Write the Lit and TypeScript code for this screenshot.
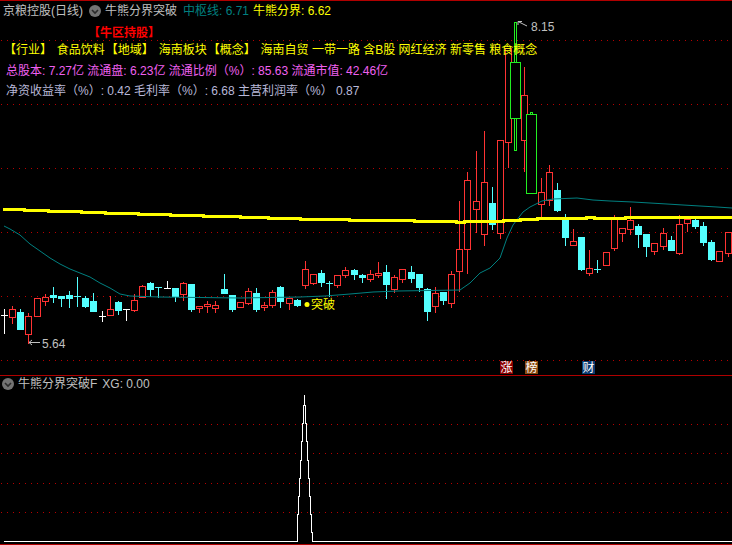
import { LitElement, html, css, svg } from "lit";
import { customElement } from "lit/decorators.js";

type C = [string, number, number, number, number];
// type, high, body top, body bottom, low  (index = position on the time axis)
const CANDLES: C[] = [
  ["w",309,315,315,333],["r",306,309,317,323],["c",309,312,329,329],["r",313,316,334,343],["r",298,298,316,316],
  ["r",294,297,301,305],["c",287,295,297,302],["c",296,296,298,306],["c",291,295,298,307],["c",277,296,296,306],
  ["c",296,298,306,307],["c",293,301,311,311],["w",311,316,316,321],["r",296,309,315,315],["c",301,302,310,314],
  ["w",309,309,309,320],["r",294,300,310,311],["r",285,286,297,297],["c",282,283,289,296],["c",287,287,287,297],
  ["w",281,288,288,288],["c",288,288,296,301],["r",282,283,294,300],["c",284,284,309,311],["r",306,306,308,312],
  ["r",301,304,306,312],["r",301,305,308,312],["c",274,289,293,293],["c",295,295,309,311],["r",302,302,307,307],
  ["r",288,291,303,304],["c",288,293,309,311],["r",302,305,307,310],["r",290,292,305,307],["c",286,287,301,307],
  ["r",298,298,303,309],["c",299,300,305,306],["r",261,269,285,288],["r",274,274,283,284],["c",270,273,282,286],
  ["c",281,283,283,296],["r",275,275,285,287],["r",267,270,275,277],["c",269,270,274,279],["c",274,275,277,282],
  ["r",270,274,279,281],["r",262,273,275,277],["c",265,272,284,298],["r",275,277,289,292],["r",269,269,279,282],
  ["c",266,272,278,282],["c",274,274,287,291],["c",288,289,311,320],["r",287,293,306,312],["c",292,292,300,304],
  ["r",271,274,303,307],["r",201,249,271,291],["r",172,180,249,273],["r",151,201,209,232],["r",131,182,234,245],
  ["c",187,203,224,229],["r",140,140,233,238],["r",48,48,142,167],["g",22,62,118,150],["r",67,95,140,171],
  ["g",112,114,193,193],["r",178,192,204,216],["r",165,172,200,205],["c",183,190,210,211],["c",214,220,237,245],
  ["r",229,241,245,245],["c",237,237,269,270],["r",250,268,273,275],["c",260,269,269,272],["r",252,252,265,265],
  ["r",215,219,248,250],["r",228,228,233,241],["r",207,220,229,234],["c",224,226,234,247],["c",234,234,246,256],
  ["r",243,243,251,254],["r",228,233,246,249],["c",236,240,250,250],["r",215,224,253,254],["r",219,219,223,231],
  ["c",219,220,226,228],["c",222,226,242,245],["c",240,242,259,260],["r",251,251,261,261],["r",232,232,253,256],
];

const COLORS: Record<string, string> = { r: "#ff3333", c: "#54ffff", w: "#ffffff", g: "#22ee22" };

const TEAL = "4,226 10,229 20,235 30,244 40,251 50,258 60,264 70,269 80,273 90,277 100,283 110,288 120,294 130,296 160,297 240,298 300,297 325,296 350,294 373,292 398,291 460,290 470,283 480,273 490,268 500,258 507,238 513,225 523,212 530,207 542,201 553,199 577,198 593,200 610,201 633,202 650,203 667,204 683,205 700,206 717,207 732,208";

const YELLOW: [number, number][] = [
  [3,209],[24,210],[48,211],[81,212],[105,213],[138,214],[170,215],[203,216],[240,217],[268,218],[300,219],
  [349,220],[414,221],[456,222],[464,221],[503,220],[520,219],[537,218],[586,217],[594,218],[625,217],[732,217],
];
const yellowPath = () => {
  let d = `M${YELLOW[0][0]} ${YELLOW[0][1]}.5`;
  for (let i = 1; i < YELLOW.length; i++) {
    d += `H${YELLOW[i][0]}`;
    if (i < YELLOW.length - 1) d += `V${YELLOW[i][1]}.5`;
  }
  return d;
};

const xOf = (i: number) => Math.round(4 + 8.13 * i);

const candle = (c: C, i: number) => {
  const [t, hi, top, bot, lo] = c;
  const cx = xOf(i);
  const col = COLORS[t];
  const mid = cx + 0.5;
  if (t === "g") {
    return svg`<rect class="hollow" x=${cx - 1.5} y=${hi + 0.5} width="2" height=${lo - hi} stroke=${col}></rect>
      <rect class="hollow" x=${cx - 5.5} y=${top + 0.5} width="10" height=${bot - top} stroke=${col}></rect>`;
  }
  const wicks = svg`<path d="M${mid} ${hi}V${top}M${mid} ${bot}V${lo + 1}" stroke=${col}></path>`;
  if (top === bot) {
    return svg`${wicks}<path d="M${cx - 3} ${top + 0.5}H${cx + 4}" stroke=${col}></path>`;
  }
  if (t === "c") {
    return svg`${wicks}<rect x=${cx - 3} y=${top} width="7" height=${bot - top + 1} fill=${col}></rect>`;
  }
  return svg`${wicks}<rect class="hollow" x=${cx - 2.5} y=${top + 0.5} width="6" height=${bot - top} stroke=${col}></rect>`;
};

const dotted = (y: number) => svg`<line class="dot" x1="1" x2="732" y1=${y + 0.5} y2=${y + 0.5}></line>`;

const peak = () => {
  const ys = [541.5, 532, 514, 496, 478, 460, 441, 423, 405, 395];
  const leftX = [0, 297.5, 297.5, 298.5, 299.5, 300.5, 301.5, 302.5, 303.5, 304.5];
  const rightX = [0, 312.5, 311.5, 310.5, 309.5, 308.5, 307.5, 306.5, 305.5, 304.5];
  const pts: string[] = ["4,541.5"];
  for (let k = 1; k < ys.length; k++) pts.push(`${leftX[k]},${ys[k - 1]}`, `${leftX[k]},${ys[k]}`);
  for (let k = ys.length - 1; k > 0; k--) pts.push(`${rightX[k]},${ys[k]}`, `${rightX[k]},${ys[k - 1]}`);
  pts.push("732,541.5");
  return pts.join(" ");
};

const chevron = html`<svg class="icon" width="12" height="12" viewBox="0 0 12 12">
  <circle cx="6" cy="6" r="6" fill="#737373"></circle>
  <path d="M3 5 L6 8 L9 5" fill="none" stroke="#2b2b2b" stroke-width="1.6"></path>
</svg>`;

@customElement("app-root")
export class AppRoot extends LitElement {
  static styles = css`
    :host {
      display: block;
      width: 732px;
      height: 545px;
      background: #000;
      overflow: hidden;
      font-family: "Liberation Sans", "Noto Sans CJK SC", sans-serif;
      font-size: 12px;
      line-height: 16px;
      white-space: nowrap;
    }
    .pane { position: relative; }
    .pane.main { height: 375px; }
    .pane.sub { height: 170px; }
    .chart { position: absolute; inset: 0; display: block; }
    .chart path, .chart line, .chart rect, .chart polyline { shape-rendering: crispEdges; }
    .chart path, .chart polyline { fill: none; }
    .chart .hollow { fill: #000; stroke-width: 1; }
    .chart .dot { stroke: #b80000; stroke-width: 1; stroke-dasharray: 1 5; }
    .chart .rule { stroke: #b00000; stroke-width: 1; }
    .chart .teal { stroke: #008080; stroke-width: 1; shape-rendering: auto; }
    .chart .yellow { stroke: #ffff00; stroke-width: 3; }
    .chart .mark { stroke: #c0c0c0; stroke-width: 1; shape-rendering: auto; }
    .chart .peak { stroke: #fff; stroke-width: 1; }
    .chart text { font-size: 12px; font-family: "Liberation Sans", "Noto Sans CJK SC", sans-serif; }
    .chart .price { fill: #c0c0c0; }
    .chart .sign { fill: #ffff00; }
    .chart .badge { fill: #fff; text-anchor: middle; }

    .head { position: relative; display: flex; flex-direction: column; align-items: flex-start; }
    .row { display: flex; align-items: center; height: 16px; }
    .line { display: block; height: 16px; }
    .title { margin-top: 3px; padding-left: 3px; }
    .name { color: #c0c0c0; width: 86px; }
    .icon { flex: none; margin-right: 4px; }
    .indicator { color: #c0c0c0; width: 78px; }
    .mid { color: #008080; width: 70px; }
    .bound { color: #ffff00; }
    .hold { margin-top: 6px; padding-left: 88px; color: #ff0000; font-weight: 700; }
    .info { margin-top: 1px; padding-left: 3px; color: #ffff00; }
    .tag { margin: 0 1.5px 0 1px; }
    .stock { margin-top: 5px; padding-left: 6px; color: #f060f0; }
    .fin { margin-top: 4px; padding-left: 6px; color: #b8b8d8; }
    .sub .head { padding: 1px 0 0 2px; }
    .sub .label { color: #c0c0c0; }
    .sub .icon { margin-right: 4px; }
    .sub .xg { margin-left: 5px; }
  `;

  render() {
    return html`
      <div class="pane main">
        <svg class="chart" width="732" height="375" viewBox="0 0 732 375">
          <line class="rule" x1="0" x2="732" y1="0.5" y2="0.5"></line>
          ${[40, 104, 168, 232, 296, 360].map(dotted)}
          ${CANDLES.map(candle)}
          <polyline class="teal" points=${TEAL}></polyline>
          <path class="yellow" d=${yellowPath()}></path>
          <path class="mark" d="M518 21.5L527 26M518 21.5H522M518 21.5V25"></path>
          <text class="price" x="531" y="31">8.15</text>
          <path class="mark" d="M29 342.5H40M29 342.5L32 340M29 342.5L32 345"></path>
          <text class="price" x="42" y="348">5.64</text>
          <circle cx="307" cy="304.5" r="2.5" fill="#ffff00"></circle>
          <text class="sign" x="311" y="309">突破</text>
          <rect x="500" y="361" width="13" height="13" fill="#8b0000"></rect>
          <text class="badge" x="506.5" y="372">涨</text>
          <rect x="525" y="361" width="13" height="13" fill="#8a4a10"></rect>
          <text class="badge" x="531.5" y="372">榜</text>
          <rect x="582" y="361" width="13" height="13" fill="#0a3a70"></rect>
          <text class="badge" x="588.5" y="372">财</text>
        </svg>
        <div class="head">
          <div class="row title">
            <span class="name">京粮控股(日线)</span>
            ${chevron}
            <span class="indicator">牛熊分界突破</span>
            <span class="mid">中枢线: 6.71</span>
            <span class="bound">牛熊分界: 6.62</span>
          </div>
          <div class="row hold">【牛区持股】</div>
          <div class="line info"><span class="tag">【行业】</span> 食品饮料<span class="tag">【地域】</span> 海南板块<span class="tag">【概念】</span> 海南自贸 一带一路 含B股 网红经济 新零售 粮食概念</div>
          <div class="row stock">总股本: 7.27亿 流通盘: 6.23亿 流通比例（%）: 85.63 流通市值: 42.46亿</div>
          <div class="row fin">净资收益率（%）: 0.42 毛利率（%）: 6.68 主营利润率（%） 0.87</div>
        </div>
      </div>
      <div class="pane sub">
        <svg class="chart" width="732" height="170" viewBox="0 375 732 170">
          <line class="rule" x1="0" x2="732" y1="375.5" y2="375.5"></line>
          ${[424, 453, 483, 512].map(dotted)}
          <polyline class="peak" points=${peak()}></polyline>
          <line class="rule" x1="0" x2="732" y1="544.5" y2="544.5"></line>
        </svg>
        <div class="head">
          <div class="row">
            ${chevron}
            <span class="label">牛熊分界突破F</span>
            <span class="label xg">XG: 0.00</span>
          </div>
        </div>
      </div>
    `;
  }
}
